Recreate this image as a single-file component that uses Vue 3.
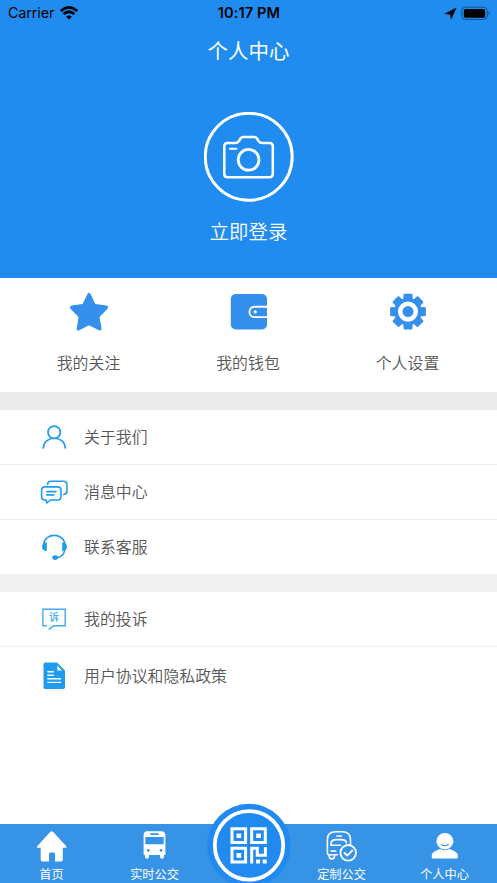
<script setup>
const shortcuts = [
  { id: 'star', label: '我的关注' },
  { id: 'wallet', label: '我的钱包' },
  { id: 'gear', label: '个人设置' },
]
const teeth = [0, 45, 90, 135, 180, 225, 270, 315]
const groups = [
  [
    { id: 'user', label: '关于我们' },
    { id: 'message', label: '消息中心' },
    { id: 'service', label: '联系客服' },
  ],
  [
    { id: 'complaint', label: '我的投诉' },
    { id: 'document', label: '用户协议和隐私政策' },
  ],
]
const tabs = [
  { id: 'home', label: '首页' },
  { id: 'bus', label: '实时公交' },
  { id: 'scan', label: '' },
  { id: 'custom', label: '定制公交' },
  { id: 'me', label: '个人中心' },
]
</script>

<template>
  <div class="page">
    <header class="hero">
      <div class="status">
        <div class="carrier">
          <span>Carrier</span>
          <svg width="18" height="14" viewBox="60 5 18 14">
            <g fill="none" stroke="#000" stroke-width="2.7">
              <path d="M60.8 10.1Q69 2.7 77.2 10.1" />
              <path d="M63.6 13.1Q69 8.4 74.4 13.1" />
            </g>
            <path d="M66.2 15.8Q69 13.2 71.8 15.8L69 18.4Z" />
          </svg>
        </div>
        <div class="time">10:17 PM</div>
        <div class="power">
          <svg width="46" height="15" viewBox="444 5 46 15">
            <path d="M456 7.2L451.1 17.8L450.4 13.2L445 12.8Z" stroke="#000" stroke-width=".6" stroke-linejoin="round" />
            <rect x="461.8" y="6.2" width="25.4" height="12.2" rx="3.6" fill="none" stroke="#105087" stroke-width="1" />
            <rect x="463.8" y="8" width="21.4" height="8.7" rx="2" />
            <path d="M488.7 10.3Q491 12.3 488.7 14.3Z" fill="#105087" />
          </svg>
        </div>
      </div>
      <h1>个人中心</h1>
      <svg class="avatar" width="90" height="90" viewBox="204 112 90 90" fill="none" stroke="#fff" stroke-linejoin="round" stroke-linecap="round">
        <circle cx="248.7" cy="156.8" r="43.5" stroke-width="3" />
        <path stroke-width="2.5" d="M227.5 143H235Q237.5 143 239 141L240.5 138.5Q241.5 137 243.3 137H254.2Q256 137 257 138.5L258.5 141Q260 143 262.5 143H269.5Q272.8 143 272.8 146.3V174Q272.8 177.2 269.5 177.2H227.5Q224.3 177.2 224.3 174V146.3Q224.3 143 227.5 143Z" />
        <circle cx="248.6" cy="159.8" r="10.4" stroke-width="2.8" />
        <path d="M230 148.7H236.5" stroke-width="2" />
      </svg>
      <div class="login">立即登录</div>
    </header>

    <nav class="shortcuts">
      <a v-for="s in shortcuts" :key="s.id" class="shortcut">
        <svg v-if="s.id === 'star'" width="40" height="40" viewBox="69 292 40 40" fill="#348fed">
          <path d="M87.5 294Q89 291.5 90.6 294L95.3 304L106.5 305.5Q109.3 306.3 107.5 308.7L99.5 317L101.6 328.4Q101.7 331.3 98.9 330.3L89 325.2L79.2 330.3Q76.4 331.3 76.7 328.4L78.5 317L70.6 308.9Q69 306.5 71.7 305.5L82.6 304Z" />
        </svg>
        <svg v-else-if="s.id === 'wallet'" width="40" height="40" viewBox="228 292 40 40">
          <rect x="230.8" y="294" width="36.2" height="35.5" rx="5" fill="#348fed" />
          <path d="M268 306.7H254.5C247.8 306.7 247.8 317.1 254.5 317.1H268" fill="none" stroke="#fff" stroke-width="1.9" />
          <circle cx="255.3" cy="311.9" r="1.6" fill="#fff" />
        </svg>
        <svg v-else width="40" height="40" viewBox="-20 -20 40 40" fill="#348fed">
          <g transform="translate(0 -.4)">
            <path v-for="angle in teeth" :key="angle" d="M-4.8 -12L-4.4 -17Q-4.2 -17.9 -3.3 -17.9H3.3Q4.2 -17.9 4.4 -17L4.8 -12Z" :transform="`rotate(${angle})`" />
            <circle r="13.7" />
            <circle r="7.8" fill="none" stroke="#fff" stroke-width="4.6" />
          </g>
        </svg>
        <span>{{ s.label }}</span>
      </a>
    </nav>

    <section v-for="(group, index) in groups" :key="index" class="group">
      <a v-for="item in group" :key="item.id" class="row">
        <svg v-if="item.id === 'user'" width="28" height="28" viewBox="40 423 28 28" fill="none" stroke="#209cee" stroke-width="1.7" stroke-linecap="round">
          <circle cx="54.2" cy="432.3" r="6.2" />
          <path d="M43.4 448C43.8 435 64.7 435 65.2 448" />
        </svg>
        <svg v-else-if="item.id === 'message'" width="28" height="28" viewBox="40 478 28 28" fill="none" stroke="#209cee" stroke-width="1.6" stroke-linecap="round" stroke-linejoin="round">
          <path d="M47.6 484.5Q47.6 481.2 51 481.2H63.5Q67 481.2 67 484.7V491Q67 494 63.8 494.5" />
          <path d="M45 486.9H57.5Q61 486.9 61 490.4V496.6Q61 500 57.5 500H50.5L46.8 503L46.2 500H45Q41.6 500 41.6 496.6V490.4Q41.6 486.9 45 486.9Z" />
          <path d="M46.8 491.6H56M46.8 494.9H53.8" />
        </svg>
        <svg v-else-if="item.id === 'service'" width="28" height="28" viewBox="40 533 28 28" fill="none" stroke="#209cee" stroke-width="1.6">
          <path d="M43.8 544C44.8 532.5 63.8 532.5 64.8 544" />
          <path d="M64.7 550Q63.5 557.6 56 557.6" />
          <path d="M46.8 542.3V551Q42 550.6 42 546.7T46.8 542.3ZM62.2 542.3V551Q67 550.6 67 546.7T62.2 542.3Z" fill="#209cee" stroke="none" />
          <ellipse cx="55.2" cy="557.6" rx="2.9" ry="2.4" fill="#209cee" stroke="none" />
        </svg>
        <svg v-else-if="item.id === 'complaint'" width="28" height="28" viewBox="40 605 28 28">
          <path d="M46.8 625.8H42.9V609.3H65.2V625.8H54L48.6 629.3" fill="none" stroke="#42aaf0" stroke-width="1.4" />
          <text x="54.1" y="621.3" text-anchor="middle" class="seal">诉</text>
        </svg>
        <svg v-else width="28" height="28" viewBox="40 662 28 28">
          <path d="M45.3 662.5H57L65 670.5V687.2Q65 689 63.2 689H45.3Q43.5 689 43.5 687.2V664.3Q43.5 662.5 45.3 662.5Z" fill="#209cee" />
          <path d="M57.3 665.6V670.4H62Z" fill="#fff" />
          <path d="M47.3 671.8H53.8M47.3 675.3H53.8M47.3 678.8H61M47.3 682.4H61" stroke="#fff" stroke-width="1.4" />
        </svg>
        <span>{{ item.label }}</span>
      </a>
    </section>

    <nav class="tabs">
      <a v-for="tab in tabs" :key="tab.id" class="tab">
        <svg v-if="tab.id === 'home'" width="32" height="32" viewBox="36 830 32 32" fill="#fff">
          <path d="M50.3 831.7Q51.7 830.7 53 831.7L66.3 846.2Q67 847.7 65.5 847.7H62.8V859.8Q62.8 861.5 61 861.5H55V854Q55 852.6 53.6 852.6H50.3Q49 852.6 49 854V861.5H42.4Q40.7 861.5 40.7 859.8V847.7H37.8Q36.3 847.7 37.2 846.2Z" />
        </svg>
        <svg v-else-if="tab.id === 'bus'" width="32" height="32" viewBox="138.8 830 32 32">
          <path d="M147 831.2H161.5Q165 831.2 165.2 835V855H163.8V856.7Q163.8 858.7 161.8 858.7T159.8 856.7V855H148.8V856.7Q148.8 858.7 146.8 858.7T144.8 856.7V855H143.4V835Q143.5 831.2 147 831.2Z" fill="#fff" />
          <g fill="#3693e6"><rect x="149.8" y="833.2" width="9" height="1.7" rx=".8" /><rect x="145.2" y="837" width="18.3" height="7.3" rx=".5" /><circle cx="148" cy="850.4" r="1.4" /><circle cx="160.8" cy="850.4" r="1.4" /></g>
        </svg>
        <div v-else-if="tab.id === 'scan'" class="scan">
          <svg width="84" height="84" viewBox="206.7 803 84 84">
            <circle cx="248.6" cy="845.5" r="41.8" fill="#208af0" />
            <circle cx="248.7" cy="845.4" r="34.2" fill="none" stroke="#fff" stroke-width="3.8" />
            <g fill="none" stroke="#fff" stroke-width="3">
              <path d="M231.7 828.7h13.6v13.8h-13.6zM251.4 828.7h13.6v13.8h-13.6zM231.7 848.3h13.6v13.8h-13.6z" />
              <path d="M251.4 863.6V848.3H257V855.2H265.1V847" />
            </g>
            <path d="M236.2 833.4h4.7v4.7h-4.7zM255.9 833.4h4.7v4.7h-4.7zM236.2 853h4.7v4.7h-4.7zM255.8 859.6h4v4h-4zM262.4 859.6h4v4h-4z" fill="#fff" />
          </svg>
        </div>
        <svg v-else-if="tab.id === 'custom'" width="32" height="32" viewBox="325.8 830 32 32" fill="none" stroke="#fff" stroke-width="1.6" stroke-linecap="round" stroke-linejoin="round">
          <path d="M337.2 854.8H329Q327.2 854.8 327.2 852.8V839.5Q327.2 831.8 335.5 831.8H342Q350.3 831.8 350.3 839.5V844" />
          <path d="M336.7 836H341.3M330.8 845.3V844Q330.8 839.6 336 839.6H341Q346.2 839.6 346.2 843M330.8 845.3H340.3M330.8 851H335.6M329 855.3V856.2C329 859.7 334.3 859.7 334.3 856.2V855" />
          <circle cx="348" cy="852.8" r="7.8" stroke-width="1.8" />
          <path d="M344.3 853L347.1 855.6L352 850.6" stroke-width="1.9" />
        </svg>
        <svg v-else width="32" height="32" viewBox="428.8 830 32 32">
          <ellipse cx="444.7" cy="841.3" rx="8.5" ry="8.2" fill="#fff" />
          <path d="M431.5 856C431.5 851.5 436.5 850.5 440.2 849Q444.5 851.5 449 849C452.7 850.5 457.7 851.5 457.7 856V857Q457.7 858.6 456 858.6H433.2Q431.5 858.6 431.5 857Z" fill="#fff" />
          <path d="M441 844.4Q444.6 847.2 448.2 844.4" fill="none" stroke="#3693e6" stroke-width="1.1" stroke-linecap="round" />
        </svg>
        <span v-if="tab.label">{{ tab.label }}</span>
      </a>
    </nav>
  </div>
</template>

<style>
body { margin: 0; overflow: hidden; }
</style>

<style scoped>
.page {
  width: 497px;
  height: 883px;
  display: flex;
  flex-direction: column;
  overflow: hidden;
  background: #fff;
  color: #575757;
  font-family: "Noto Sans CJK SC", sans-serif;
}
svg { display: block; flex: none; }
.hero {
  height: 278px;
  flex: none;
  display: flex;
  flex-direction: column;
  align-items: center;
  background: #208cf0;
  color: #fff;
}
.status {
  width: 100%;
  height: 26px;
  box-sizing: border-box;
  padding: 0 7px 0 8px;
  display: grid;
  grid-template-columns: 1fr auto 1fr;
  align-items: center;
  color: #000;
  font: 14.3px/26px Inter, sans-serif;
}
.carrier { display: flex; align-items: center; }
.carrier span { width: 52px; letter-spacing: -.1px; }
.time { font-size: 14.6px; font-weight: 600; letter-spacing: .1px; }
.power { display: flex; justify-content: flex-end; }
h1 {
  margin: 9px 0 0;
  font-size: 20.5px;
  line-height: 30px;
  font-weight: 400;
}
.avatar { margin-top: 47px; }
.login {
  margin-top: 14px;
  font-size: 19.4px;
  line-height: 30px;
  font-weight: 350;
}
.shortcuts {
  height: 114px;
  flex: none;
  display: grid;
  grid-template-columns: 177px 142px 177px;
}
.shortcut {
  display: flex;
  flex-direction: column;
  align-items: center;
  padding-top: 14px;
  font-size: 15.9px;
  line-height: 24px;
  font-weight: 350;
}
.shortcut span { margin-top: 19px; }
.group { flex: none; border-top: 18px solid #eaeaea; }
.group + .group { border-top-color: #f0f0f0; }
.row {
  height: 54px;
  display: flex;
  align-items: center;
  padding-left: 40px;
  gap: 16px;
  font-size: 15.9px;
  line-height: 24px;
  font-weight: 350;
}
.row + .row { border-top: 1px solid #eee; }
.group + .group .row:last-child { height: 58px; }
.seal { font-size: 10px; font-weight: 500; fill: #42aaf0; }
.tabs {
  margin-top: auto;
  height: 59px;
  flex: none;
  display: grid;
  grid-template-columns: 103px 103px 85px 101px 105px;
  background: #3693e6;
  color: #fff;
}
.tab {
  display: flex;
  flex-direction: column;
  align-items: center;
  padding-top: 6px;
  font-size: 12.2px;
  line-height: 18px;
}
.tab span { margin-top: 3px; }
.scan { margin-top: -27px; }
</style>
